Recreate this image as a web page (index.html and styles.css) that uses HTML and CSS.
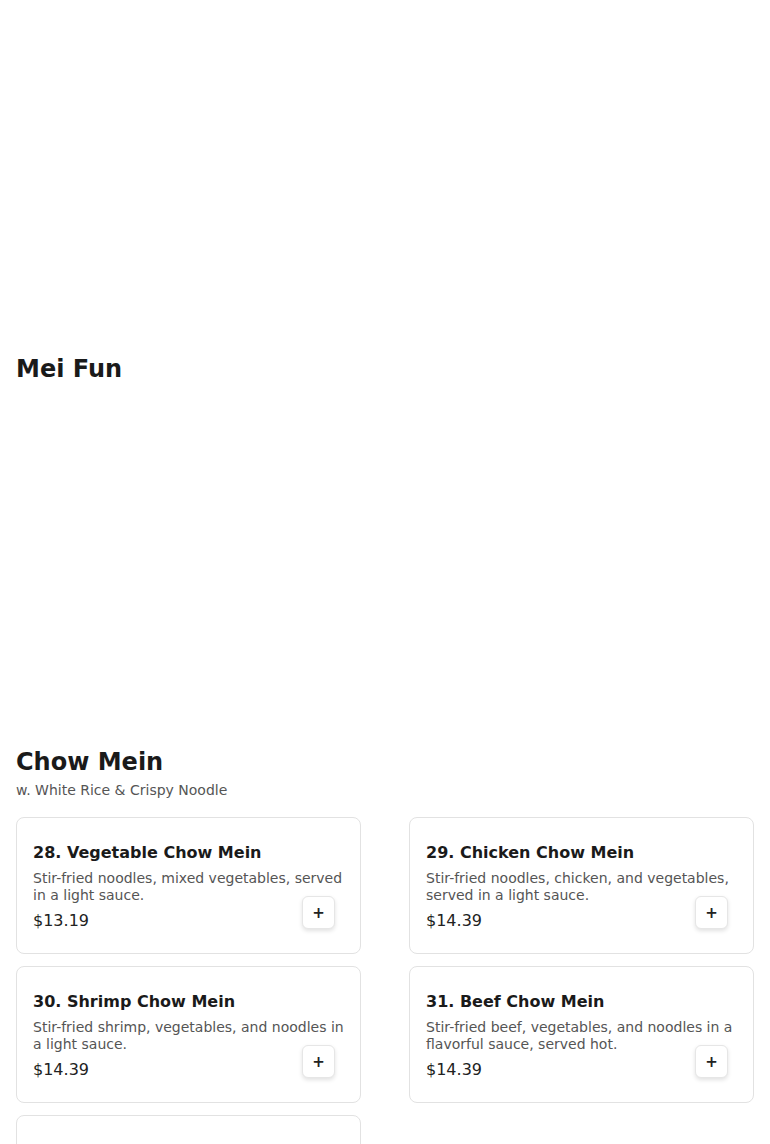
FILE: index.html
```html
<!DOCTYPE html>
<html>
<head>
<meta charset="utf-8">
<link rel="stylesheet" href="styles.css">
</head>
<body>
<main class="menu">
  <div class="banner-space"></div>
  <section class="category">
    <h2 class="category-title">Mei Fun</h2>
    <div class="empty-list"></div>
  </section>
  <section class="category">
    <h2 class="category-title">Chow Mein</h2>
    <p class="category-note">w. White Rice &amp; Crispy Noodle</p>
    <div class="item-grid">
      <div class="item-card">
        <h3 class="item-name">28. Vegetable Chow Mein</h3>
        <p class="item-desc">Stir-fried noodles, mixed vegetables, served in a light sauce.</p>
        <div class="item-foot"><span class="item-price">$13.19</span><button class="add-btn">+</button></div>
      </div>
      <div class="item-card">
        <h3 class="item-name">29. Chicken Chow Mein</h3>
        <p class="item-desc">Stir-fried noodles, chicken, and vegetables, served in a light sauce.</p>
        <div class="item-foot"><span class="item-price">$14.39</span><button class="add-btn">+</button></div>
      </div>
      <div class="item-card">
        <h3 class="item-name">30. Shrimp Chow Mein</h3>
        <p class="item-desc">Stir-fried shrimp, vegetables, and noodles in a light sauce.</p>
        <div class="item-foot"><span class="item-price">$14.39</span><button class="add-btn">+</button></div>
      </div>
      <div class="item-card">
        <h3 class="item-name">31. Beef Chow Mein</h3>
        <p class="item-desc">Stir-fried beef, vegetables, and noodles in a flavorful sauce, served hot.</p>
        <div class="item-foot"><span class="item-price">$14.39</span><button class="add-btn">+</button></div>
      </div>
      <div class="item-card">
        <h3 class="item-name">32. House Special Chow Mein</h3>
        <p class="item-desc">Stir-fried noodles with chicken, beef, shrimp and vegetables.</p>
        <div class="item-foot"><span class="item-price">$15.59</span><button class="add-btn">+</button></div>
      </div>
    </div>
  </section>
</main>
</body>
</html>
```
FILE: styles.css
```css
* { box-sizing: border-box; }
html, body { margin: 0; padding: 0; background: #fff; }
body { font-family: "DejaVu Sans", sans-serif; color: #1a1a1a; }
.menu { padding: 0 16px; }
.banner-space { height: 353px; }
.category-title { font-size: 24px; font-weight: bold; margin: 0; line-height: 32px; color: #1a1a1a; }
.empty-list { height: 361px; }
.category-note { margin: 3px 0 0; font-size: 14px; color: #555; line-height: 18px; }
.item-grid { display: grid; grid-template-columns: 1fr 1fr; column-gap: 48px; row-gap: 12px; margin-top: 18px; }
.item-card { border: 1px solid #e2e2e2; border-radius: 8px; padding: 24px 16px 16px; position: relative; min-height: 137px; }
.item-name { font-size: 16px; font-weight: bold; margin: 0; line-height: 22px; }
.item-desc { font-size: 14px; color: #555; margin: 6px 0 0; line-height: 17px; }
.item-foot { display: flex; justify-content: space-between; align-items: flex-end; margin-top: 7px; }
.item-price { font-size: 16px; line-height: 20px; color: #222; }
.add-btn { width: 33px; height: 33px; margin-right: 9px; margin-bottom: 2px; margin-top: -28px; border: 1px solid #e6e6e6; border-radius: 6px; background: #fff; box-shadow: 0 2px 4px rgba(0,0,0,0.12); font-family: "DejaVu Sans", sans-serif; font-size: 15px; font-weight: bold; color: #222; padding: 0; }
```
